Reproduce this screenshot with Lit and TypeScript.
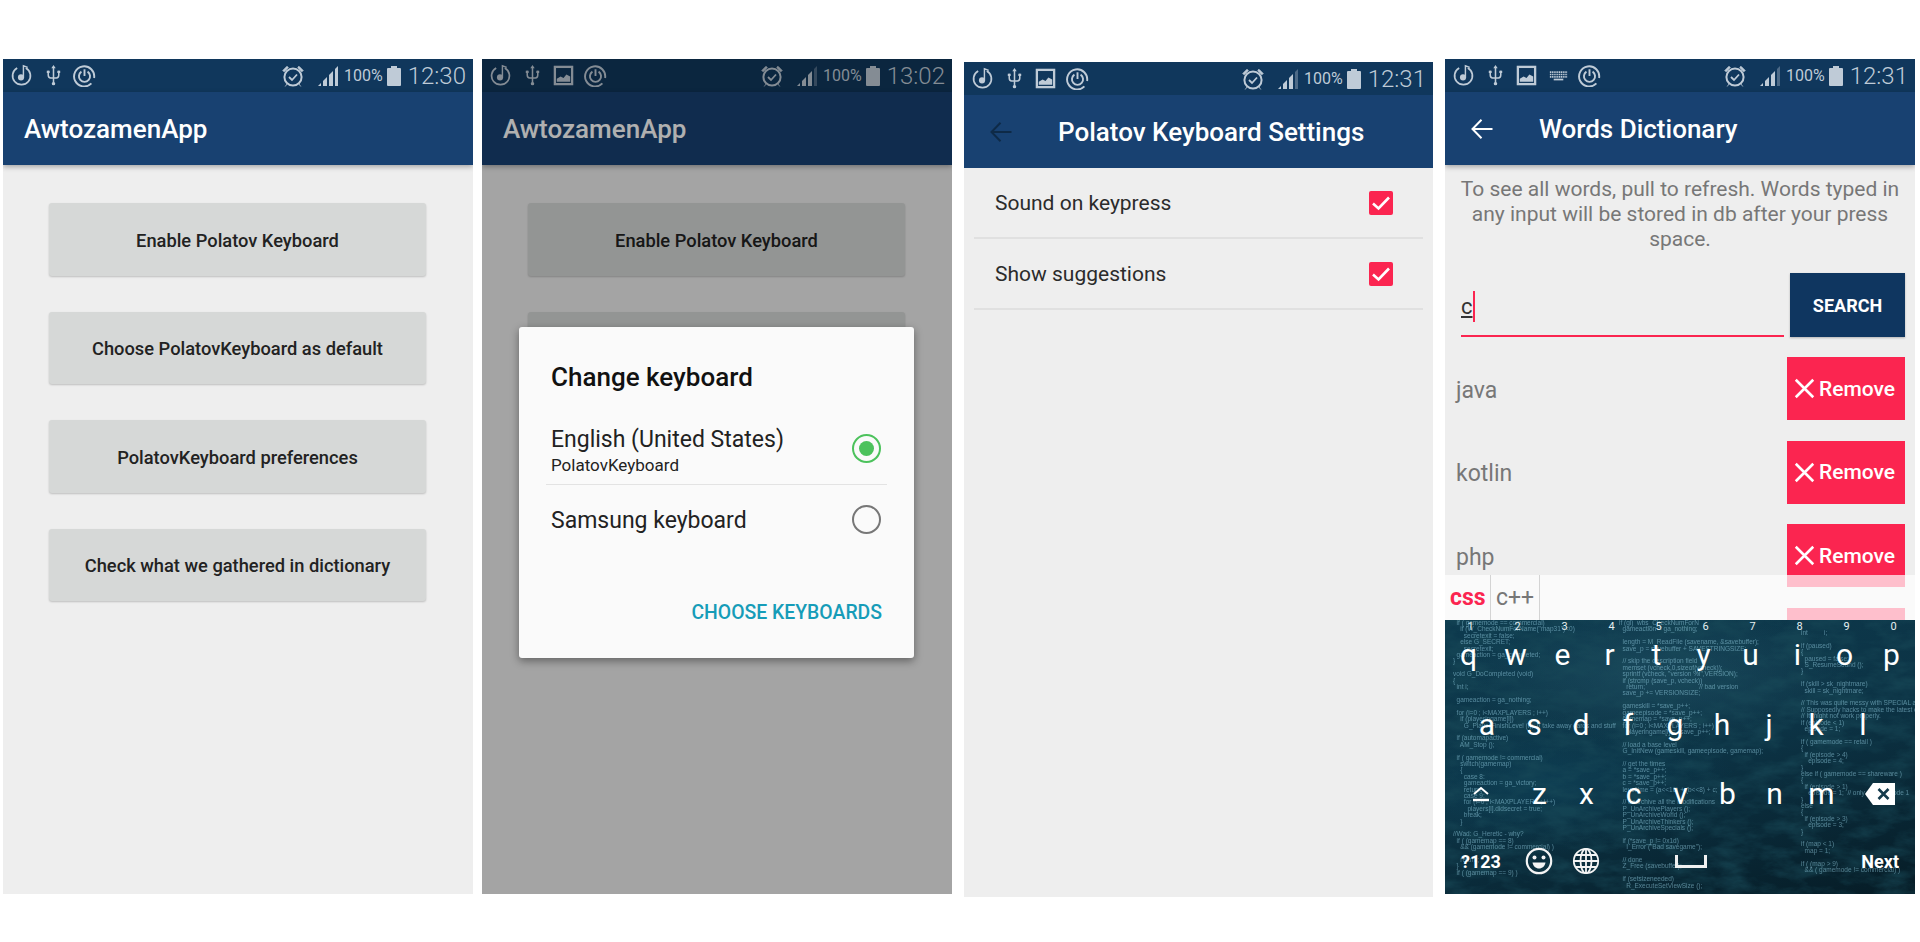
import { LitElement, html, svg, css, nothing } from 'lit';
import { customElement } from 'lit/decorators.js';

// status bar glyphs, all on a 24x24 box
const icons = {
  music: html`<svg viewBox="0 0 24 24"><path d="M7.500 4.200a9.300 9.300 0 1 0 9 0" fill="none" stroke="currentColor" stroke-width="1.800"/><circle cx="11.500" cy="14" r="3.200" fill="currentColor"/><path d="M14 14V1.800l4.500 1.700" fill="none" stroke="currentColor" stroke-width="1.500"/></svg>`,
  usb: html`<svg viewBox="0 0 24 24"><path d="M12 3v18M6.500 7v4.500c0 2.200 1.200 3 2.500 3h6c1.300 0 2.500-.8 2.500-3V7" fill="none" stroke="currentColor" stroke-width="1.600"/><path d="M12 1l2.300 3.400H9.700zM5 7h3v2.400H5zM16 7h3v2.400h-3z" fill="currentColor"/><circle cx="12" cy="20.500" r="1.800" fill="currentColor"/></svg>`,
  ring: html`<svg viewBox="0 0 24 24"><path d="M19.200 20.200A10.500 10.500 0 1 1 22 14.600" fill="none" stroke="currentColor" stroke-width="2"/><path d="M8.800 8a5.800 5.800 0 1 0 6.400 0" fill="none" stroke="currentColor" stroke-width="2"/><path d="M12 5.500v7" fill="none" stroke="currentColor" stroke-width="2"/></svg>`,
  image: html`<svg viewBox="0 0 24 24"><rect x="3" y="3" width="18" height="18" fill="none" stroke="currentColor" stroke-width="2.400"/><path d="M5 18.500v-3l4-2.500 3 1.500 3-3.500 4 2v5.500z" fill="currentColor"/></svg>`,
  keys: html`<svg viewBox="0 0 24 24"><path d="M3 8.500h18M3 11h18M3 13.500h18" fill="none" stroke="currentColor" stroke-width="1.700" stroke-dasharray="1.300 .6"/><path d="M7 16.200h10" fill="none" stroke="currentColor" stroke-width="1.800"/></svg>`,
  alarm: html`<svg viewBox="0 0 24 24"><circle cx="12" cy="13" r="8.600" fill="none" stroke="currentColor" stroke-width="2"/><path d="M8 13l3 3 5-5.500" fill="none" stroke="currentColor" stroke-width="1.800"/><path d="M1.800 6.500 6 2.300l1.300 1.300-4.200 4.200zM22.200 6.500 18 2.300l-1.300 1.300 4.200 4.200zM6 20l-1.800 2.500M18 20l1.800 2.500" fill="currentColor" stroke="currentColor" stroke-width=".8"/></svg>`,
};

const signal = (bars: number) => html`<svg class="signal" viewBox="0 0 22 22">
  ${[
    'M1 21l3-3v3z',
    'M6 21v-5l4-4v9z',
    'M12 21V10l4-4v15z',
    'M18 21V4l3-3v20z',
  ].map((d, i) => svg`<path d=${d} fill="currentColor" opacity=${i < bars ? 1 : 0.35}></path>`)}
</svg>`;

const arrow = html`<svg viewBox="0 0 24 24"><path d="M22.500 12H3M11.500 2.800 2.500 12l9 9.200" fill="none" stroke="currentColor" stroke-width="2"/></svg>`;

const menuButtons = [
  'Enable Polatov Keyboard',
  'Choose PolatovKeyboard as default',
  'PolatovKeyboard preferences',
  'Check what we gathered in dictionary',
];

const words = ['java', 'kotlin', 'php', ''];

const codeLeft = `  if ( gamemode == commercial)
    if (W_CheckNumForName("map31")<0)
      secretexit = false;
    else G_SECRET;
      secretexit;
  gameaction = ga_completed;
}

void G_DoCompleted (void)
{
  int i;

  gameaction = ga_nothing;

  for (i=0 ; i<MAXPLAYERS ; i++)
    if (playeringame[i])
      G_PlayerFinishLevel (i);  // take away cards and stuff

  if (automapactive)
    AM_Stop ();

  if ( gamemode != commercial)
    switch(gamemap)
    {
      case 8:
      gameaction = ga_victory;
      return;
      case 9:
      for (i=0 ; i<MAXPLAYERS ; i++)
        players[i].didsecret = true;
      break;
    }

//Wad: G_Heretic - why?
  if ( (gamemap == 8)
    && (gamemode != commercial) )

    return;
  }
  if ( (gamemap == 9) )`;

const codeMiddle = `if (gl)  wbs_CheckNumForN
  gameaction = ga_nothing;

  length = M_ReadFile (savename, &savebuffer);
  save_p = savebuffer + SAVESTRINGSIZE;

  // skip the description field
  memset (vcheck,0,sizeof(vcheck));
  sprintf (vcheck, "version %i",VERSION);
  if (strcmp (save_p, vcheck))
    return;                              // bad version
  save_p += VERSIONSIZE;

  gameskill = *save_p++;
  gameepisode = *save_p++;
  gamemap = *save_p++;
  for (i=0 ; i<MAXPLAYERS ; i++)
    playeringame[i] = *save_p++;

  // load a base level
  G_InitNew (gameskill, gameepisode, gamemap);

  // get the times
  a = *save_p++;
  b = *save_p++;
  c = *save_p++;
  leveltime = (a<<16) + (b<<8) + c;

  // dearchive all the modifications
  P_UnArchivePlayers ();
  P_UnArchiveWorld ();
  P_UnArchiveThinkers ();
  P_UnArchiveSpecials ();

  if (*save_p != 0x1d)
    I_Error ("Bad savegame");

  // done
  Z_Free (savebuffer);

  if (setsizeneeded)
    R_ExecuteSetViewSize ();`;

const codeRight = `int         i;

if (paused)
{
  paused = false;
  S_ResumeSound ();
}

if (skill > sk_nightmare)
  skill = sk_nightmare;

// This was quite messy with SPECIAL and commented parts.
// Supposedly hacks to make the latest edition work.
// It might not work properly.
if (episode < 1)
  episode = 1;

if ( gamemode == retail )
{
  if (episode > 4)
    episode = 4;
}
else if ( gamemode == shareware )
{
  if (episode > 1)
    episode = 1;  // only start episode 1
}
else
{
  if (episode > 3)
    episode = 3;
}

if (map < 1)
  map = 1;

if ( (map > 9)
  && ( gamemode != commercial) )`;

const rows = [
  ['q', 'w', 'e', 'r', 't', 'y', 'u', 'i', 'o', 'p'],
  ['a', 's', 'd', 'f', 'g', 'h', 'j', 'k', 'l'],
  ['z', 'x', 'c', 'v', 'b', 'n', 'm'],
];

@customElement('app-root')
export class AppRoot extends LitElement {
  static styles = css`
    :host {
      display: block;
      height: 942px;
      background: #fff;
      font-family: Roboto, 'Liberation Sans', sans-serif;
      overflow: hidden;
    }
    .page {
      display: flex;
      padding: 59px 0 0 3px;
    }
    .phone {
      position: relative;
      flex: none;
      width: 470px;
      height: 835px;
      background: #eee;
      overflow: hidden;
      display: flex;
      flex-direction: column;
    }
    .phone.second { margin-left: 9px; }
    .phone.third { margin: 3px 0 0 12px; width: 469px; }
    .phone.fourth { margin-left: 12px; }

    /* status bar */
    .status {
      flex: none;
      height: 33px;
      display: flex;
      align-items: center;
      background: #10375c;
      color: #bfcbd7;
      padding: 0 7px 0 3px;
    }
    .slot {
      width: 31.5px;
      display: flex;
      justify-content: center;
    }
    .slot svg { width: 23px; height: 23px; display: block; }
    .spacer { flex: 1; }
    .alarm { width: 24px; height: 24px; }
    .signal { width: 22px; height: 22px; margin-left: 12px; }
    .batt-text {
      font-size: 16px;
      margin-left: 5px;
      white-space: nowrap;
    }
    .battery {
      position: relative;
      width: 14px;
      height: 18px;
      margin: 2px 0 0 4px;
      background: currentColor;
      border-radius: 1px;
    }
    .battery::before {
      content: '';
      position: absolute;
      top: -2px;
      left: 4px;
      width: 6px;
      height: 2px;
      background: currentColor;
    }
    .time {
      font-size: 24px;
      font-weight: 300;
      margin-left: 7px;
    }

    /* app bar */
    .bar {
      flex: none;
      height: 73px;
      display: flex;
      align-items: center;
      background: #184171;
      color: #fff;
      font-size: 26px;
      font-weight: 500;
      position: relative;
      box-shadow: 0 2px 5px rgba(0, 0, 0, 0.3);
      padding-left: 21px;
      z-index: 1;
    }
    .bar.flat { box-shadow: none; }
    .bar svg {
      width: 24px;
      height: 24px;
      margin: 0 45px 0 4px;
      flex: none;
    }
    .bar.flat svg { color: #0e2a47; }

    /* menu */
    .menu {
      display: flex;
      flex-direction: column;
      gap: 36px;
      padding: 38px 47px 0 46px;
    }
    .menu-btn {
      height: 72.500px;
      padding-top: 2px;
      box-sizing: border-box;
      display: flex;
      align-items: center;
      justify-content: center;
      background: #d6d8d7;
      border-radius: 3px;
      box-shadow: 0 1px 2px rgba(0, 0, 0, 0.2);
      color: #222;
      font-size: 18.300px;
      font-weight: 500;
    }

    /* dialog */
    .scrim {
      position: absolute;
      inset: 0;
      background: rgba(0, 0, 0, 0.31);
      z-index: 2;
    }
    .dialog {
      position: absolute;
      left: 37px;
      top: 268px;
      width: 395px;
      height: 331px;
      box-sizing: border-box;
      padding: 34px 27px 0;
      background: #fafafa;
      border-radius: 3px;
      box-shadow: 0 3px 8px rgba(0, 0, 0, 0.4);
      z-index: 3;
    }
    .dialog h2 {
      margin: 0 0 0 5px;
      font-size: 26px;
      font-weight: 500;
      line-height: 32px;
      color: #111;
    }
    .choice {
      display: flex;
      align-items: center;
      justify-content: space-between;
      padding: 0 6px 0 5px;
      color: #222;
    }
    .choice.first {
      height: 74px;
      margin-top: 18px;
      border-bottom: 1px solid #e3e3e3;
      box-sizing: border-box;
      padding-top: 8px;
    }
    .choice.other {
      height: 69px;
      padding-top: 2px;
      box-sizing: border-box;
    }
    .choice .name { font-size: 23px; line-height: 28px; }
    .choice .sub { font-size: 17px; line-height: 23px; }
    .radio {
      width: 29px;
      height: 29px;
      margin-bottom: 2px;
      box-sizing: border-box;
      border: 2px solid #777;
      border-radius: 50%;
      flex: none;
    }
    .radio.on {
      margin-bottom: 6px;
      border-color: #4cc25c;
      display: flex;
      align-items: center;
      justify-content: center;
    }
    .radio.on::after {
      content: '';
      width: 15px;
      height: 15px;
      border-radius: 50%;
      background: #4cc25c;
    }
    .action {
      margin: 47px 5px 0 0;
      text-align: right;
      font-size: 19.400px;
      font-weight: 500;
      color: #169cb8;
    }

    /* settings */
    .settings { padding: 0 10px; }
    .setting {
      height: 71px;
      display: flex;
      align-items: center;
      justify-content: space-between;
      padding: 0 30px 0 21px;
      font-size: 21px;
      color: #2b2b2b;
      border-bottom: 2px solid #e0e0e0;
      box-sizing: border-box;
    }
    .check {
      width: 24px;
      height: 24px;
      background: #fb2550;
      border-radius: 2px;
      display: block;
    }

    /* dictionary */
    .hint {
      margin: 0;
      padding: 12px 15px 0;
      text-align: center;
      font-size: 21px;
      line-height: 25px;
      color: #777;
    }
    .search {
      display: flex;
      gap: 6px;
      margin-top: 21px;
      padding: 0 10px 0 16px;
      height: 64px;
    }
    .field {
      width: 323px;
      flex: none;
      border-bottom: 2px solid #fb2550;
      display: flex;
      align-items: center;
      padding-top: 4px;
      box-sizing: border-box;
      font-size: 22px;
      color: #333;
    }
    .field u { text-underline-offset: 2px; }
    .caret {
      width: 2px;
      height: 31px;
      background: #fb2550;
    }
    .search-btn {
      flex: 1;
      background: #0f3660;
      color: #fff;
      font-size: 18px;
      font-weight: 700;
      display: flex;
      align-items: center;
      justify-content: center;
      box-shadow: 0 1px 2px rgba(0, 0, 0, 0.25);
    }
    .words {
      display: flex;
      flex-direction: column;
      gap: 20.500px;
      margin-top: 20px;
      padding: 0 10px 0 11px;
    }
    .word {
      display: flex;
      align-items: center;
      justify-content: space-between;
      height: 63px;
      font-size: 23px;
      color: #777;
    }
    .word > span { padding-top: 3px; }
    .remove {
      width: 118px;
      height: 63px;
      padding-right: 3px;
      box-sizing: border-box;
      display: flex;
      align-items: center;
      justify-content: center;
      gap: 4px;
      background: #fb2550;
      color: #fff;
      font-size: 21px;
      font-weight: 500;
    }
    .remove svg { width: 21px; height: 21px; flex: none; }

    /* suggestions and keyboard lie over the word list */
    .input-area {
      position: absolute;
      left: 0;
      right: 0;
      top: 516px;
      bottom: 0;
      z-index: 2;
    }
    .suggest {
      height: 45px;
      display: flex;
      background: rgba(255, 255, 255, 0.71);
    }
    .sug {
      display: flex;
      align-items: center;
      padding: 0 5px;
      border-right: 1px solid #d4d4d4;
      font-size: 23px;
      color: #777;
    }
    .sug.hit {
      width: 46px;
      box-sizing: border-box;
      font-weight: 700;
      color: #fb2550;
    }
    .keyboard {
      position: relative;
      height: 274px;
      overflow: hidden;
      background:
        radial-gradient(ellipse 200px 70px at 45% 20%, rgba(50, 105, 125, 0.35), transparent),
        radial-gradient(ellipse 190px 70px at 22% 60%, rgba(15, 75, 100, 0.4), transparent),
        linear-gradient(165deg, #0d3a4e 0%, #0c3345 50%, #061c26 100%);
    }
    .noise {
      position: absolute;
      inset: 0;
      width: 100%;
      height: 100%;
      opacity: 0.6;
    }
    .code {
      position: absolute;
      margin: 0;
      font-family: 'Liberation Sans', sans-serif;
      font-size: 6.500px;
      line-height: 6.400px;
      color: rgba(160, 220, 240, 0.5);
      filter: blur(0.35px);
      white-space: pre;
    }
    .code.left { left: 8px; top: 0; }
    .code.middle { left: 174px; top: 0; }
    .code.right { left: 356px; top: 10px; }
    .digits, .row {
      position: relative;
      display: flex;
    }
    .digits {
      height: 0;
      font-size: 11px;
      color: #e6eef0;
    }
    .digits span {
      width: 47px;
      text-align: center;
      padding-left: 4px;
      box-sizing: border-box;
      line-height: 13px;
    }
    .row {
      height: 69.500px;
      color: #fff;
      font-size: 30px;
    }
    .row.mid { padding-left: 18.500px; }
    .key {
      width: 47px;
      flex: none;
      display: flex;
      align-items: center;
      justify-content: center;
      box-sizing: border-box;
    }
    .key.shift { width: 71px; }
    .key.back { flex: 1; }
    .key svg { display: block; }
    .row.last {
      height: 65px;
      align-items: center;
      font-size: 18px;
      font-weight: 700;
      padding-left: 16px;
    }
    .sym { width: 54px; }
    .emo { width: 47px; display: flex; justify-content: center; }
    .space {
      margin-left: 66px;
      width: 32px;
      display: flex;
      justify-content: center;
    }
    .next { margin-left: auto; padding-right: 16px; }
  `;

  status(time: string, extra: unknown[], bars: number) {
    return html`<div class="status">
      ${[icons.music, icons.usb, ...extra].map((i) => html`<span class="slot">${i}</span>`)}
      <span class="spacer"></span>
      <span class="alarm">${icons.alarm}</span>
      ${signal(bars)}
      <span class="batt-text">100%</span>
      <span class="battery"></span>
      <span class="time">${time}</span>
    </div>`;
  }

  menu() {
    return html`<div class="menu">
      ${menuButtons.map((b) => html`<div class="menu-btn">${b}</div>`)}
    </div>`;
  }

  checkbox() {
    return html`<svg class="check" viewBox="0 0 24 24"><path d="M4 12.500l5.500 5L20 6.500" fill="none" stroke="#fff" stroke-width="2.600"/></svg>`;
  }

  keyboard() {
    const close = html`<svg viewBox="0 0 18 18"><path d="M1.500 1.500l15 15M16.500 1.500l-15 15" fill="none" stroke="#fff" stroke-width="2.200"/></svg>`;
    return html`
      <div class="words">
        ${words.map(
          (w) => html`<div class="word"><span>${w}</span>
            <div class="remove">${w ? html`${close}<span>Remove</span>` : nothing}</div></div>`,
        )}
      </div>
      <div class="input-area">
        <div class="suggest">
          <div class="sug hit">css</div>
          <div class="sug">c++</div>
        </div>
        <div class="keyboard">
          <svg class="noise" xmlns="http://www.w3.org/2000/svg">
            <filter id="grunge">
              <feTurbulence type="fractalNoise" baseFrequency="0.03 0.07" numOctaves="5" seed="7"></feTurbulence>
              <feColorMatrix values="0 0 0 0 0.01  0 0 0 0 0.07  0 0 0 0 0.1  2.400 0 0 0 -0.9"></feColorMatrix>
            </filter>
            <rect width="100%" height="100%" filter="url(#grunge)"></rect>
          </svg>
          <pre class="code left">${codeLeft}</pre>
          <pre class="code middle">${codeMiddle}</pre>
          <pre class="code right">${codeRight}</pre>
          <div class="digits">
            ${['1', '2', '3', '4', '5', '6', '7', '8', '9', '0'].map((d) => html`<span>${d}</span>`)}
          </div>
          <div class="row">${rows[0].map((k) => html`<span class="key">${k}</span>`)}</div>
          <div class="row mid">${rows[1].map((k) => html`<span class="key">${k}</span>`)}</div>
          <div class="row">
            <span class="key shift">
              <svg width="18" height="18" viewBox="0 0 18 18"><path d="M2 9l7-6 7 6" fill="none" stroke="#fff" stroke-width="2"/><path d="M1 15h16" stroke="#fff" stroke-width="2.400"/></svg>
            </span>
            ${rows[2].map((k) => html`<span class="key">${k}</span>`)}
            <span class="key back">
              <svg width="32" height="24" viewBox="0 0 32 24"><path d="M9 1h22v22H9L1 12z" fill="#fff"/><path d="M14.500 7l10 10M24.500 7l-10 10" stroke="#143a4c" stroke-width="2.600"/></svg>
            </span>
          </div>
          <div class="row last">
            <span class="sym">?123</span>
            <span class="emo">
              <svg width="28" height="28" viewBox="0 0 28 28"><circle cx="14" cy="14" r="12.200" fill="none" stroke="#f4f4f4" stroke-width="2.200"/><circle cx="9.500" cy="10.500" r="2" fill="#f4f4f4"/><circle cx="18.500" cy="10.500" r="2" fill="#f4f4f4"/><path d="M7.500 15.500h13c-.6 3.800-3.200 6-6.500 6s-5.900-2.200-6.500-6z" fill="#f4f4f4"/></svg>
            </span>
            <span class="emo">
              <svg width="28" height="28" viewBox="0 0 28 28" fill="none" stroke="#f4f4f4" stroke-width="1.800"><circle cx="14" cy="14" r="12.200"/><ellipse cx="14" cy="14" rx="5.500" ry="12.200"/><path d="M14 2v24M2 14h24M3.500 8h21M3.500 20h21"/></svg>
            </span>
            <span class="space">
              <svg width="32" height="13" viewBox="0 0 32 13"><path d="M1.500 0v11.500h29V0" fill="none" stroke="#f0f0f0" stroke-width="3"/></svg>
            </span>
            <span class="next">Next</span>
          </div>
        </div>
      </div>
    `;
  }

  override render() {
    return html`<div class="page">
      <section class="phone">
        ${this.status('12:30', [icons.ring], 4)}
        <header class="bar">AwtozamenApp</header>
        ${this.menu()}
      </section>

      <section class="phone second">
        ${this.status('13:02', [icons.image, icons.ring], 3)}
        <header class="bar">AwtozamenApp</header>
        ${this.menu()}
        <div class="scrim"></div>
        <div class="dialog">
          <h2>Change keyboard</h2>
          <div class="choice first">
            <div>
              <div class="name">English (United States)</div>
              <div class="sub">PolatovKeyboard</div>
            </div>
            <span class="radio on"></span>
          </div>
          <div class="choice other">
            <div class="name">Samsung keyboard</div>
            <span class="radio"></span>
          </div>
          <div class="action">CHOOSE KEYBOARDS</div>
        </div>
      </section>

      <section class="phone third">
        ${this.status('12:31', [icons.image, icons.ring], 3)}
        <header class="bar flat">${arrow}Polatov Keyboard Settings</header>
        <div class="settings">
          <div class="setting">Sound on keypress ${this.checkbox()}</div>
          <div class="setting">Show suggestions ${this.checkbox()}</div>
        </div>
      </section>

      <section class="phone fourth">
        ${this.status('12:31', [icons.image, icons.keys, icons.ring], 3)}
        <header class="bar">${arrow}Words Dictionary</header>
        <p class="hint">To see all words, pull to refresh. Words typed in any input will be stored in db after your press space.</p>
        <div class="search">
          <div class="field"><u>c</u><span class="caret"></span></div>
          <div class="search-btn">SEARCH</div>
        </div>
        ${this.keyboard()}
      </section>
    </div>`;
  }
}
